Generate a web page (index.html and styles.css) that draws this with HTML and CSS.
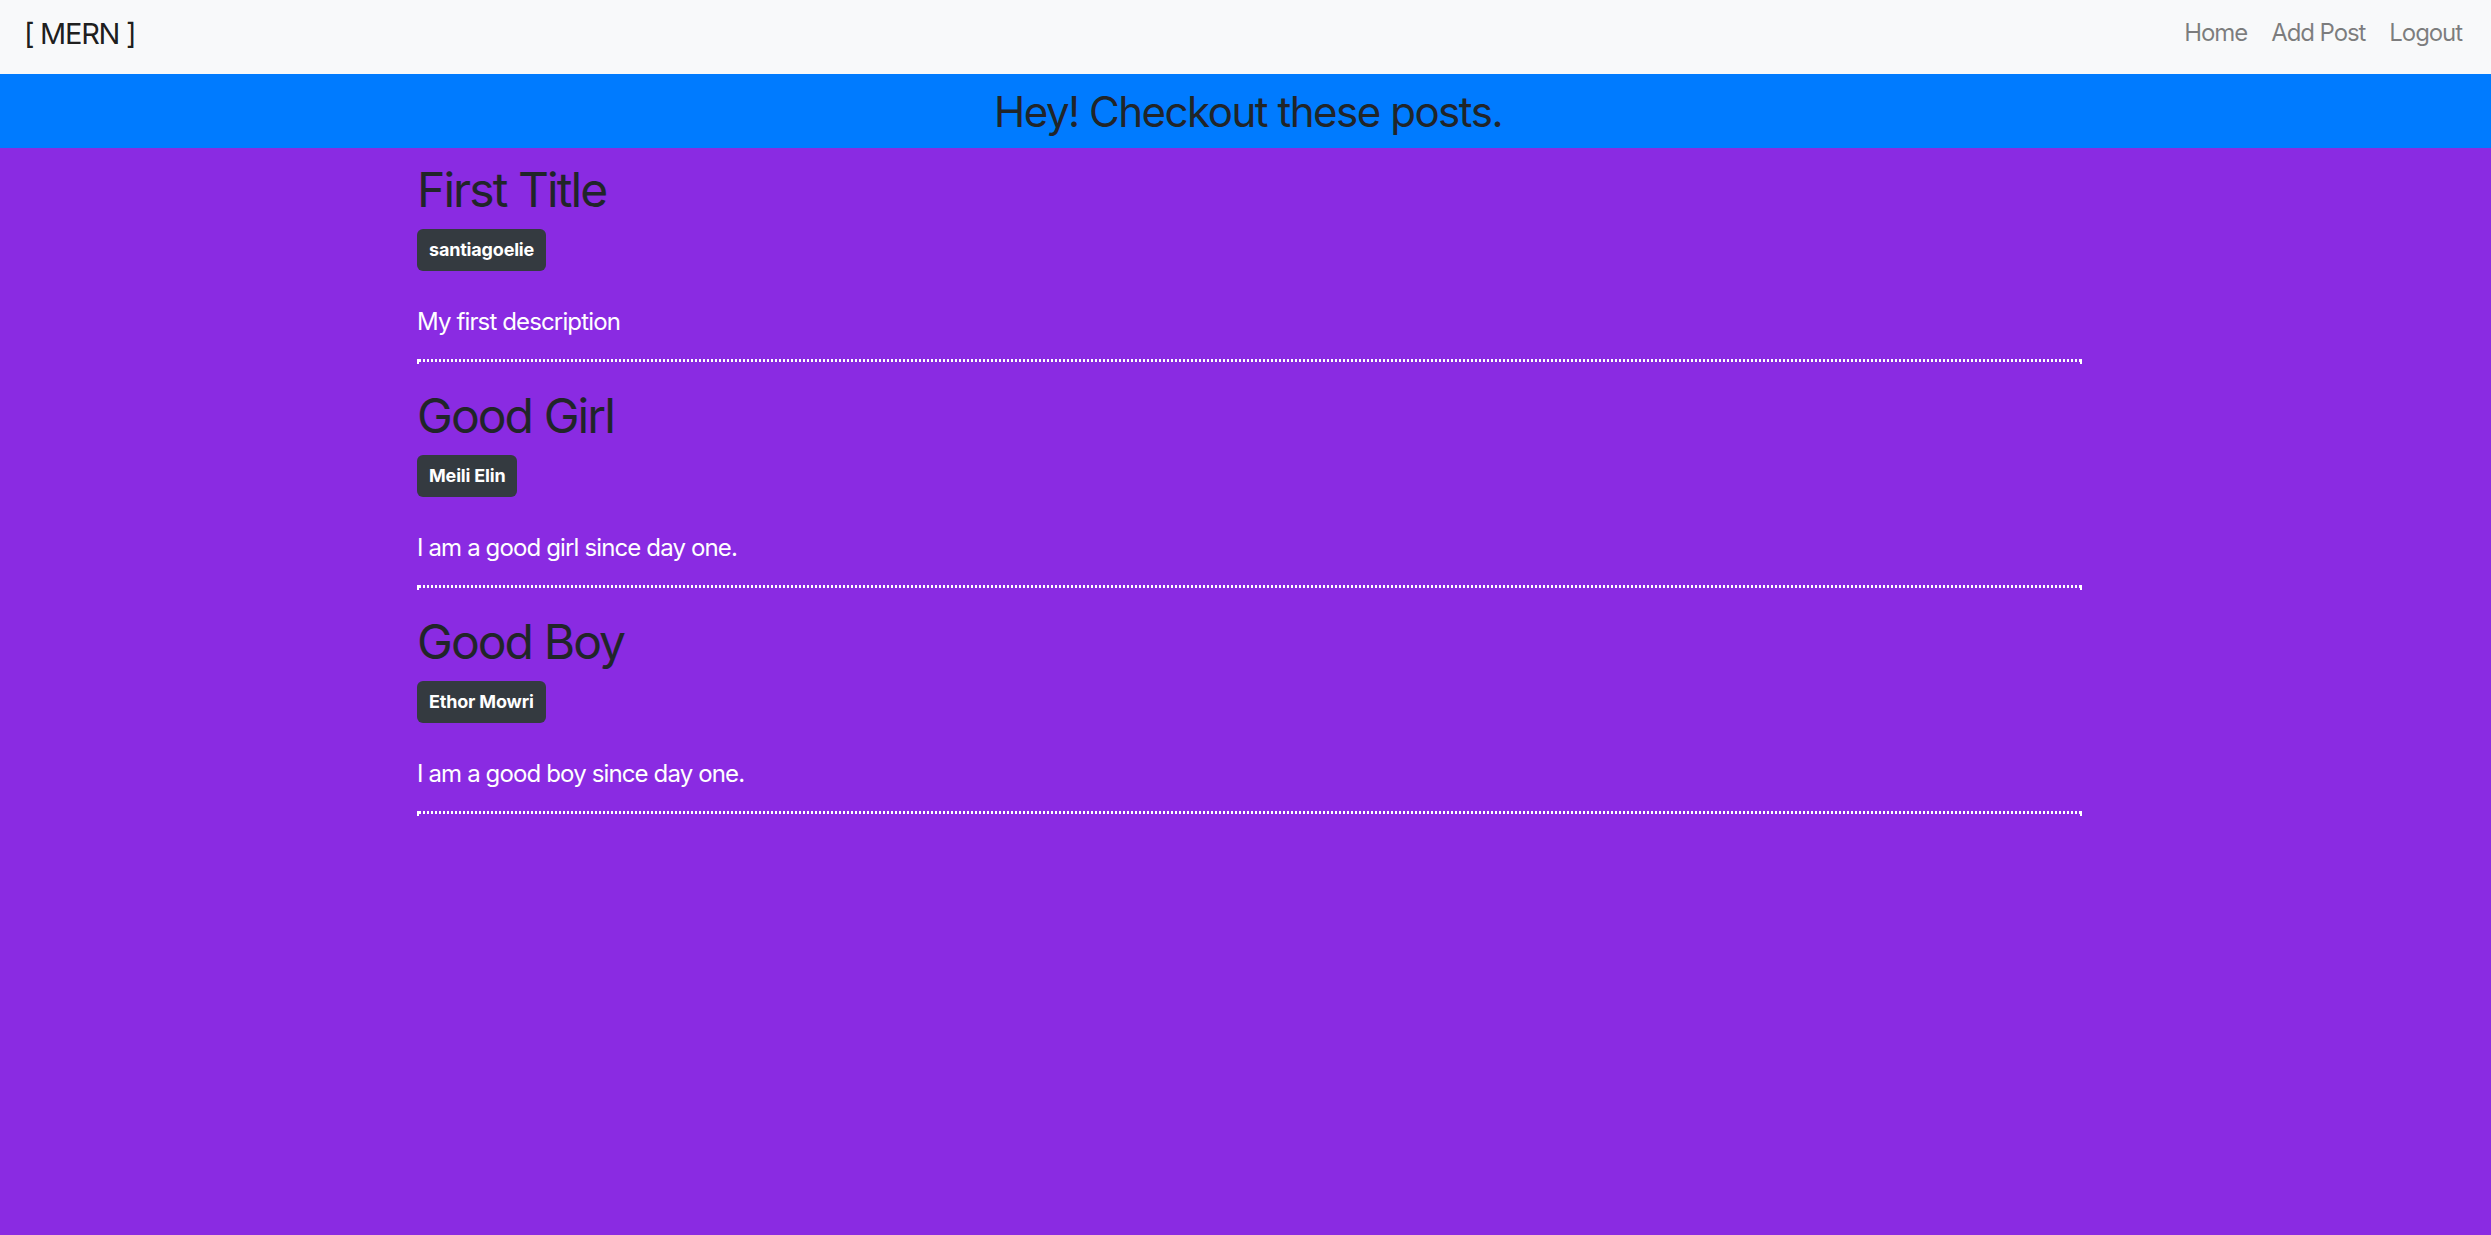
FILE: index.html
```html
<!DOCTYPE html>
<html lang="en">
<head>
<meta charset="utf-8">
<title>MERN</title>
<link rel="stylesheet" href="styles.css">
</head>
<body>
<nav class="navbar">
  <a class="brand" href="#">[ MERN ]</a>
  <ul class="nav">
    <li><a class="nav-link" href="#">Home</a></li>
    <li><a class="nav-link" href="#">Add Post</a></li>
    <li><a class="nav-link" href="#">Logout</a></li>
  </ul>
</nav>
<header class="banner">
  <h3 class="banner-title">Hey! Checkout these posts.</h3>
</header>
<main class="main">
  <div class="container">
    <article class="post">
      <h2 class="post-title">First Title</h2>
      <span class="badge">santiagoelie</span>
      <p class="post-desc">My first description</p>
      <div class="divider"></div>
    </article>
    <article class="post">
      <h2 class="post-title">Good Girl</h2>
      <span class="badge">Meili Elin</span>
      <p class="post-desc">I am a good girl since day one.</p>
      <div class="divider"></div>
    </article>
    <article class="post">
      <h2 class="post-title">Good Boy</h2>
      <span class="badge">Ethor Mowri</span>
      <p class="post-desc">I am a good boy since day one.</p>
      <div class="divider"></div>
    </article>
  </div>
</main>
</body>
</html>
```
FILE: styles.css
```css
* { box-sizing: border-box; }

html, body {
  margin: 0;
  padding: 0;
}

body {
  background: #8a2be2;
  font-family: "Inter", "Noto Sans", sans-serif;
  color: #212529;
  min-height: 1235px;
}

.navbar {
  display: flex;
  justify-content: space-between;
  align-items: flex-start;
  height: 74px;
  padding: 11px 17px 0 24px;
  background: #f8f9fa;
}

.brand {
  font-size: 29px;
  line-height: 45px;
  color: rgba(0, 0, 0, 0.9);
  text-decoration: none;
  letter-spacing: -0.045em;
}

.nav {
  display: flex;
  list-style: none;
  margin: 0;
  padding: 4px 0 0;
}

.nav-link {
  display: block;
  padding: 0 12px;
  font-size: 24px;
  line-height: 36px;
  color: rgba(0, 0, 0, 0.5);
  text-decoration: none;
  letter-spacing: -0.045em;
}

.banner {
  height: 74px;
  padding: 13px 0 0 5px;
  background: #007bff;
  text-align: center;
}

.banner-title {
  margin: 0;
  font-size: 42px;
  font-weight: 400;
  line-height: 50.4px;
  letter-spacing: -0.035em;
  color: #212529;
}

.main {
  padding: 13px 0 0 8px;
}

.container {
  width: 1665px;
  margin: 0 auto;
}

.post {
  display: flex;
  flex-direction: column;
  align-items: flex-start;
}

.post + .post {
  margin-top: 23px;
}

.post-title {
  margin: 0 0 10.5px;
  font-size: 48px;
  font-weight: 400;
  line-height: 57.6px;
  letter-spacing: -0.04em;
  color: #212529;
}

.badge {
  display: inline-block;
  padding: 12px;
  font-size: 18px;
  font-weight: 700;
  line-height: 1;
  letter-spacing: -0.01em;
  color: #fff;
  background: #343a40;
  border-radius: 6px;
}

.post-desc {
  margin: 33px 0 19px;
  font-size: 24px;
  line-height: 36px;
  letter-spacing: -0.036em;
  color: #fff;
}

.divider {
  align-self: stretch;
  height: 5px;
  border-left: 2px solid #fff;
  border-right: 2px solid #fff;
  background: repeating-linear-gradient(to right, #fff 0 2px, transparent 2px 4px) top left / 100% 3px no-repeat;
}
```
